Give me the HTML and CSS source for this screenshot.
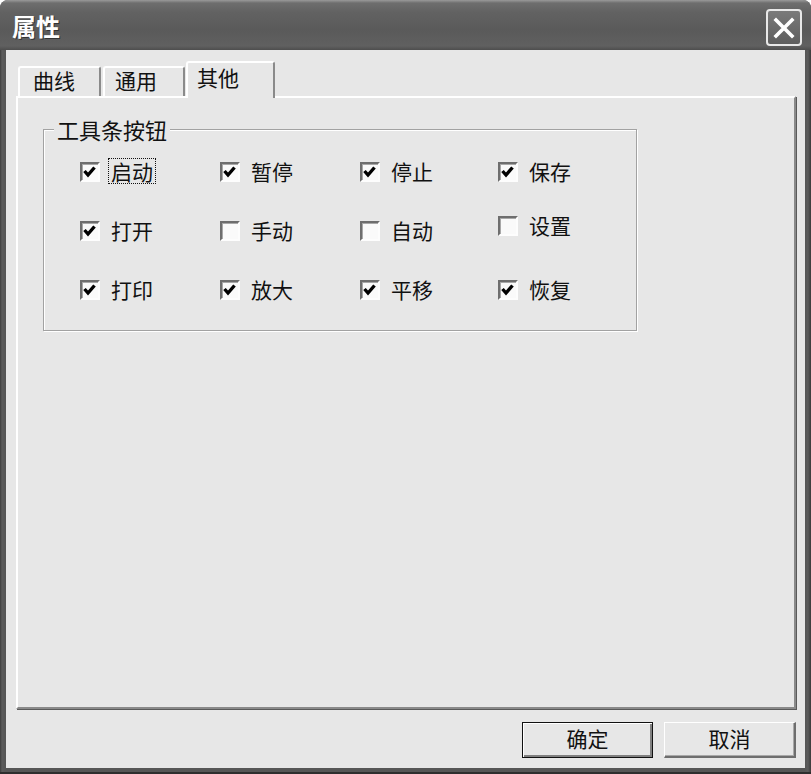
FILE: index.html
```html
<!DOCTYPE html>
<html lang="zh-CN">
<head>
<meta charset="utf-8">
<title>属性</title>
<link rel="stylesheet" href="styles.css">
</head>
<body>
<div class="window">
  <div class="titlebar">
    <span class="title">属性</span>
    <div class="close">
      <svg width="22" height="22" viewBox="0 0 22 22"><path d="M3 3 L19 19 M19 3 L3 19" stroke="#fff" stroke-width="3.6" stroke-linecap="square" fill="none"/></svg>
    </div>
  </div>
  <div class="client">
    <div class="tabs">
      <div class="tab t1">曲线</div>
      <div class="tab t2">通用</div>
      <div class="tab active">其他</div>
    </div>
    <div class="panel">
      <div class="group">
        <span class="legend">工具条按钮</span>
        <div class="grid">
          <div class="item"><span class="box on"></span><span class="lbl focus">启动</span></div>
          <div class="item"><span class="box on"></span><span class="lbl">暂停</span></div>
          <div class="item"><span class="box on"></span><span class="lbl">停止</span></div>
          <div class="item"><span class="box on"></span><span class="lbl">保存</span></div>
          <div class="item"><span class="box on"></span><span class="lbl">打开</span></div>
          <div class="item"><span class="box"></span><span class="lbl">手动</span></div>
          <div class="item"><span class="box"></span><span class="lbl">自动</span></div>
          <div class="item raised"><span class="box"></span><span class="lbl">设置</span></div>
          <div class="item"><span class="box on"></span><span class="lbl">打印</span></div>
          <div class="item"><span class="box on"></span><span class="lbl">放大</span></div>
          <div class="item"><span class="box on"></span><span class="lbl">平移</span></div>
          <div class="item"><span class="box on"></span><span class="lbl">恢复</span></div>
        </div>
      </div>
    </div>
    <div class="buttons">
      <div class="btn default">确定</div>
      <div class="btn cancel">取消</div>
    </div>
  </div>
</div>
</body>
</html>
```
FILE: styles.css
```css
html, body {
  margin: 0;
  padding: 0;
  background: #ffffff;
}
body {
  font-family: "Noto Sans CJK SC", "Noto Sans", sans-serif;
  color: #111;
}
.window {
  width: 811px;
  height: 774px;
  box-sizing: border-box;
  display: flex;
  flex-direction: column;
  background: linear-gradient(to right, #3c3c3c 0, #5c5c5c 2px, #565656 5px, #565656 805px, #5c5c5c 808px, #3a3a3a 811px);
  border-radius: 8px 8px 0 0;
  overflow: hidden;
  border-bottom: 2px solid #2e2e2e;
}
.titlebar {
  height: 50px;
  flex: none;
  display: flex;
  align-items: center;
  padding-left: 12px;
  background: linear-gradient(to bottom, #9a9a9a 0, #6e6e6e 3px, #626262 12px, #5a5a5a 30px, #606060 46px, #4e4e4e 50px);
  box-sizing: border-box;
}
.title {
  color: #fff;
  font-size: 24px;
  font-weight: bold;
  line-height: 30px;
  text-shadow: 1px 1px 0 #333;
  margin-top: 2px;
}
.close {
  margin-left: auto;
  margin-right: 9px;
  align-self: flex-start;
  margin-top: 9px;
  width: 36px;
  height: 37px;
  box-sizing: border-box;
  border: 2px solid #e8e8e8;
  border-radius: 4px;
  background: linear-gradient(to bottom, #7a7a7a, #5e5e5e);
  display: flex;
  align-items: center;
  justify-content: center;
}
.client {
  flex: 1;
  margin: 0 6px 4px 6px;
  background: #e7e7e7;
  padding: 11px 9px 10px 10px;
  display: flex;
  flex-direction: column;
  box-sizing: border-box;
}
.tabs {
  display: flex;
  align-items: flex-end;
  margin-left: 2px;
  margin-bottom: -2px;
  position: relative;
  z-index: 1;
}
.tab {
  height: 30px;
  box-sizing: border-box;
  font-size: 21px;
  line-height: 24px;
  padding-left: 13px;
  border-top: 2px solid #ffffff;
  border-left: 2px solid #ffffff;
  border-right: 2px solid #8a8a8a;
  border-radius: 3px 3px 0 0;
  background: #e7e7e7;
  margin-bottom: 2px;
}
.t1 { width: 83px; }
.t2 { width: 82px; margin-left: 2px; padding-left: 10px; }
.tab.active {
  width: 89px;
  height: 37px;
  margin-left: 1px;
  margin-bottom: 0;
  padding-left: 9px;
  padding-top: 2px;
}
.panel {
  height: 613px;
  flex: none;
  box-sizing: border-box;
  border-top: 2px solid #ffffff;
  border-left: 2px solid #ffffff;
  border-right: 2px solid #8a8a8a;
  border-bottom: 2px solid #8a8a8a;
  box-shadow: 1px 1px 0 #5a5a5a;
  padding: 31px 0 0 25px;
}
.group {
  position: relative;
  width: 594px;
  box-sizing: border-box;
  border: 1px solid #a2a2a2;
  box-shadow: inset 1px 1px 0 #ffffff, 1px 1px 0 #ffffff;
  padding: 29px 0 27px 36px;
}
.legend {
  position: absolute;
  left: 10px;
  top: -14px;
  padding: 0 3px;
  background: #e7e7e7;
  font-size: 22px;
  line-height: 26px;
}
.grid {
  display: grid;
  grid-template-columns: 140px 140px 138px 100px;
  row-gap: 33px;
  align-items: start;
}
.item {
  display: flex;
  align-items: center;
  height: 26px;
}
.item.raised {
  margin-top: -5px;
}
.box {
  width: 20px;
  height: 20px;
  box-sizing: border-box;
  border-top: 2px solid #6e6e6e;
  border-left: 2px solid #6e6e6e;
  border-right: 2px solid #fdfdfd;
  border-bottom: 2px solid #fdfdfd;
  box-shadow: inset 1px 1px 0 #a8a8a8;
  background: #fafafa;
  margin-right: 8px;
  flex: none;
}
.box.on {
  background: #fafafa url("data:image/svg+xml;utf8,<svg xmlns='http://www.w3.org/2000/svg' width='16' height='16' viewBox='0 0 16 16'><path d='M2.5 7 L6 11 L12.5 3.5' stroke='%23000' stroke-width='3.4' fill='none'/></svg>") no-repeat center;
}
.lbl {
  font-size: 21px;
  line-height: 24px;
  padding: 0 2px;
  border: 1px dotted transparent;
  margin-top: -2px;
}
.lbl.focus {
  border-color: #111;
}
.buttons {
  display: flex;
  justify-content: flex-end;
  gap: 11px;
  margin-top: 13px;
}
.btn {
  height: 36px;
  box-sizing: border-box;
  font-size: 21px;
  line-height: 30px;
  text-align: center;
  background: #e7e7e7;
}
.btn.default {
  width: 131px;
  border: 1px solid #111;
  box-shadow: inset 1px 1px 0 #ffffff, inset -2px -2px 0 #808080;
}
.btn.cancel {
  width: 132px;
  border-top: 1px solid #ffffff;
  border-left: 1px solid #ffffff;
  border-right: 2px solid #6e6e6e;
  border-bottom: 2px solid #6e6e6e;
  box-shadow: inset -1px -1px 0 #a8a8a8;
}
```
